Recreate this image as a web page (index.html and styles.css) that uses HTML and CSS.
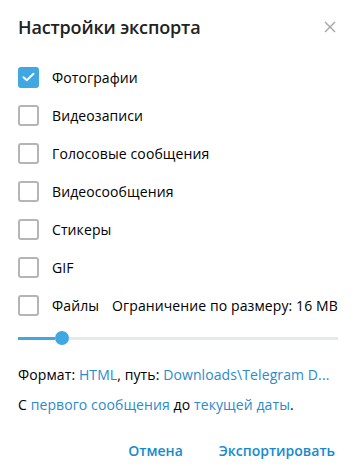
FILE: index.html
```html
<!DOCTYPE html>
<html lang="ru">
<head>
<meta charset="utf-8">
<link rel="stylesheet" href="styles.css">
</head>
<body>
<div class="dialog">
  <div class="header">
    <div class="title">Настройки экспорта</div>
    <div class="close">
      <svg width="12" height="12" viewBox="0 0 12 12"><path d="M1 1L11 11M11 1L1 11" stroke="#a6a6a6" stroke-width="1.4" fill="none"/></svg>
    </div>
  </div>
  <div class="list">
    <div class="row"><span class="box checked"><svg width="13" height="10" viewBox="0 0 13 10"><path d="M1.5 5.2L4.8 8.3L11.5 1.7" stroke="#fff" stroke-width="1.9" fill="none" stroke-linecap="round" stroke-linejoin="round"/></svg></span><span class="label">Фотографии</span></div>
    <div class="row"><span class="box"></span><span class="label">Видеозаписи</span></div>
    <div class="row"><span class="box"></span><span class="label">Голосовые сообщения</span></div>
    <div class="row"><span class="box"></span><span class="label">Видеосообщения</span></div>
    <div class="row"><span class="box"></span><span class="label">Стикеры</span></div>
    <div class="row"><span class="box"></span><span class="label">GIF</span></div>
    <div class="row"><span class="box"></span><span class="label">Файлы</span><span class="limit">Ограничение по размеру: 16 MB</span></div>
  </div>
  <div class="slider">
    <div class="track-active"></div>
    <div class="thumb"></div>
    <div class="track-rest"></div>
  </div>
  <div class="info">Формат: <span class="link">HTML</span>, путь: <span class="link">Downloads\Telegram D...</span></div>
  <div class="info info2">С <span class="link">первого сообщения</span> до <span class="link">текущей даты</span>.</div>
  <div class="buttons">
    <span class="btn">Отмена</span>
    <span class="btn">Экспортировать</span>
  </div>
</div>
</body>
</html>
```
FILE: styles.css
```css
html, body {
  margin: 0;
  padding: 0;
  background: #fff;
}
.dialog {
  width: 356px;
  height: 466px;
  font-family: "Open Sans", "Noto Sans", sans-serif;
  color: #000;
  box-sizing: border-box;
}
.header {
  display: flex;
  justify-content: space-between;
  align-items: center;
  height: 54px;
  padding: 0 20px 0 18px;
}
.title {
  font-size: 18px;
  font-weight: 600;
  letter-spacing: -0.15px;
  color: #222;
}
.close {
  display: flex;
  width: 12px;
  height: 12px;
}
.list {
  padding-top: 4px;
}
.row {
  display: flex;
  align-items: center;
  height: 38px;
  padding-left: 18px;
  font-size: 14px;
  letter-spacing: 0.1px;
}
.box {
  width: 21px;
  height: 21px;
  box-sizing: border-box;
  border: 2px solid #b5b5b5;
  border-radius: 3px;
  display: flex;
  align-items: center;
  justify-content: center;
}
.box.checked {
  background: #40a7e3;
  border-color: #40a7e3;
}
.label {
  margin-left: 13px;
}
.limit {
  margin-left: 13px;
}
.slider {
  display: flex;
  align-items: center;
  height: 28px;
  margin: 0 18px;
}
.track-active {
  width: 37px;
  height: 3px;
  background: #40a7e3;
}
.thumb {
  width: 14px;
  height: 14px;
  border-radius: 50%;
  background: #40a7e3;
  flex: none;
}
.track-rest {
  flex: 1;
  height: 3px;
  background: #e1eaef;
}
.info {
  font-size: 14px;
  letter-spacing: 0.1px;
  padding: 0 18px;
  margin-top: 13px;
  line-height: 20px;
}
.info2 {
  margin-top: 10px;
}
.link {
  color: #2a8bcc;
}
.buttons {
  display: flex;
  justify-content: flex-end;
  gap: 36px;
  padding: 0 21px 0 0;
  margin-top: 26px;
}
.btn {
  font-size: 14px;
  font-weight: 600;
  color: #168acd;
}
```
